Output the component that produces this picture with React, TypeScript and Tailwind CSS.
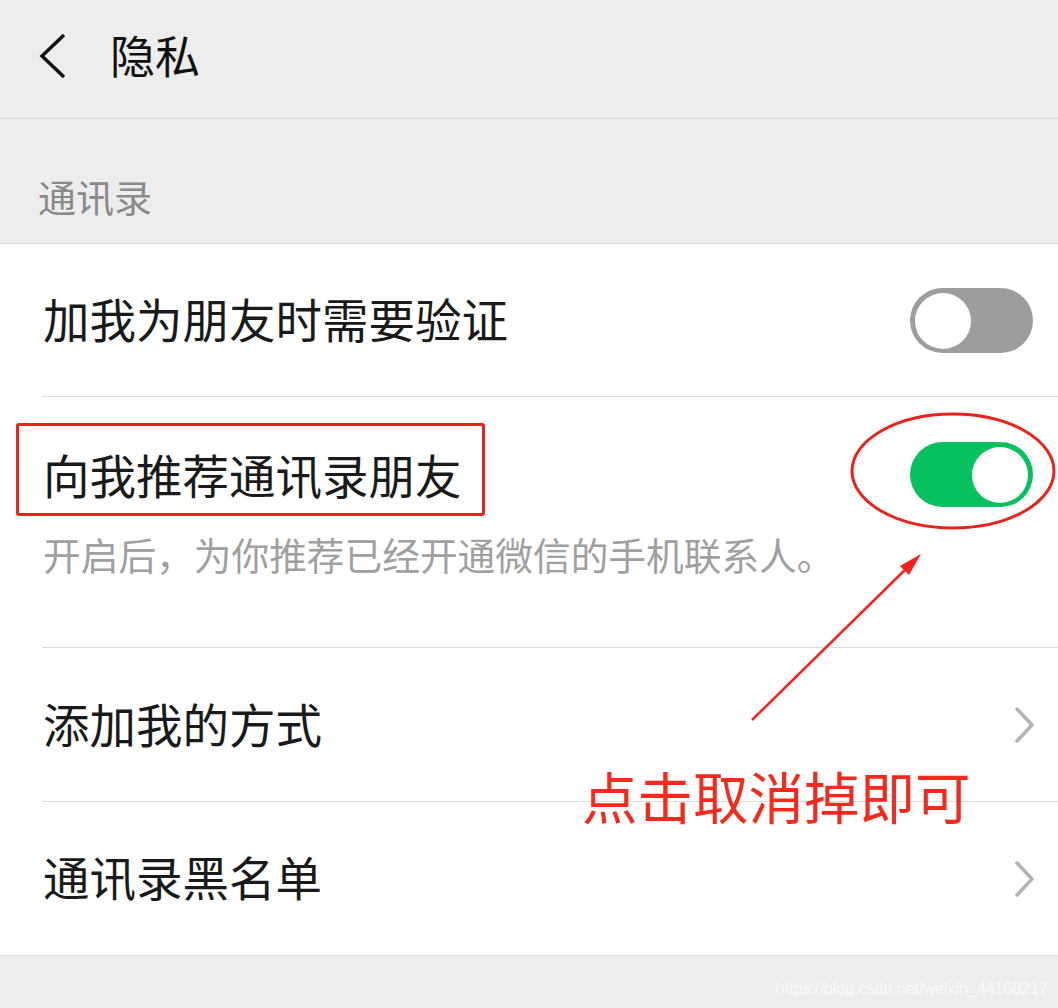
import React from 'react'

const font = { fontFamily: '"Noto Sans CJK SC", "Noto Sans", sans-serif' }

type ToggleProps = { on: boolean }

const Toggle: React.FC<ToggleProps> = ({ on }) => {
  return (
    <div
      className={`w-[123px] h-[65px] rounded-full p-[5px] flex items-center ${
        on ? 'bg-[#07c160] justify-end' : 'bg-[#9d9d9d] justify-start'
      }`}
    >
      <div className="w-[56px] h-[56px] rounded-full bg-white" />
    </div>
  )
}

const Chevron = () => (
  <svg width="22" height="38" viewBox="0 0 22 38" className="block">
    <path d="M3 3 L18 19 L3 35" fill="none" stroke="#b3b3b3" strokeWidth="3.5" strokeLinecap="round" strokeLinejoin="round" />
  </svg>
)

export default function App() {
  return (
    <div className="relative w-[1058px] h-[1008px] bg-[#ededed] overflow-hidden" style={font}>
      {/* header */}
      <div className="h-[119px] flex items-center border-b border-[#d6d6d6]">
        <svg width="32" height="48" viewBox="0 0 32 48" className="ml-[36px] -mt-[6px]">
          <path d="M28 3 L6 24 L28 45" fill="none" stroke="#111" strokeWidth="3.5" strokeLinejoin="miter" />
        </svg>
        <span className="ml-[42px] text-[45px] leading-none text-[#111] -mt-[10px]">隐私</span>
      </div>

      {/* section title */}
      <div className="h-[125px] flex items-center pl-[38px] border-b border-[#d9d9d9]">
        <span className="text-[38px] leading-none text-[#8a8a8a] mt-[30px]">通讯录</span>
      </div>

      {/* list */}
      <div className="bg-white border-b border-[#d9d9d9]">
        <div className="h-[153px] flex items-center justify-between pl-[43px] pr-[25px] relative">
          <span className="text-[46.5px] leading-none text-[#1a1a1a] -mt-[4px]">加我为朋友时需要验证</span>
          <Toggle on={false} />
          <div className="absolute left-[42px] right-0 bottom-0 h-px bg-[#dcdcdc]" />
        </div>

        <div className="h-[251px] pl-[43px] pr-[25px] relative">
          <div className="flex items-center justify-between pt-[45px]">
            <span className="relative text-[46.5px] leading-none text-[#1a1a1a]">
              向我推荐通讯录朋友
              <span className="absolute -left-[27px] -right-[23px] -top-[28px] -bottom-[18px] border-[3px] border-[#e8231b] rounded-[3px]" />
            </span>
            <Toggle on={true} />
          </div>
          <div className="mt-[28px] text-[37.7px] leading-none text-[#a0a0a0]">开启后，为你推荐已经开通微信的手机联系人。</div>
          <div className="absolute left-[42px] right-0 bottom-0 h-px bg-[#dcdcdc]" />
        </div>

        <div className="h-[154px] flex items-center justify-between pl-[43px] pr-[22px] relative">
          <span className="text-[46.5px] leading-none text-[#1a1a1a] -mt-[4px]">添加我的方式</span>
          <Chevron />
          <div className="absolute left-[42px] right-0 bottom-0 h-px bg-[#dcdcdc]" />
        </div>

        <div className="h-[153px] flex items-center justify-between pl-[43px] pr-[22px]">
          <span className="text-[46.5px] leading-none text-[#1a1a1a] -mt-[4px]">通讯录黑名单</span>
          <Chevron />
        </div>
      </div>

      {/* watermark */}
      <div
        className="absolute right-[10px] top-[977px] text-[16px] text-[#fafafa]"
        style={{ fontFamily: '"Liberation Sans", Arial, sans-serif' }}
      >
        https://blog.csdn.net/weixin_44168217
      </div>

      {/* annotations */}
      <svg className="absolute left-0 top-0 pointer-events-none" width="1058" height="1008">
        <ellipse cx="953" cy="471" rx="101" ry="57" fill="none" stroke="#e8231b" strokeWidth="3" />
        <line x1="752" y1="720" x2="912" y2="563" stroke="#f5221b" strokeWidth="2.5" />
        <polygon points="921,554 900,566 909,575" fill="#f5221b" />
      </svg>
      <div className="absolute left-[582px] top-[768px] text-[55.5px] leading-none text-[#f52a1e]">点击取消掉即可</div>
    </div>
  )
}
